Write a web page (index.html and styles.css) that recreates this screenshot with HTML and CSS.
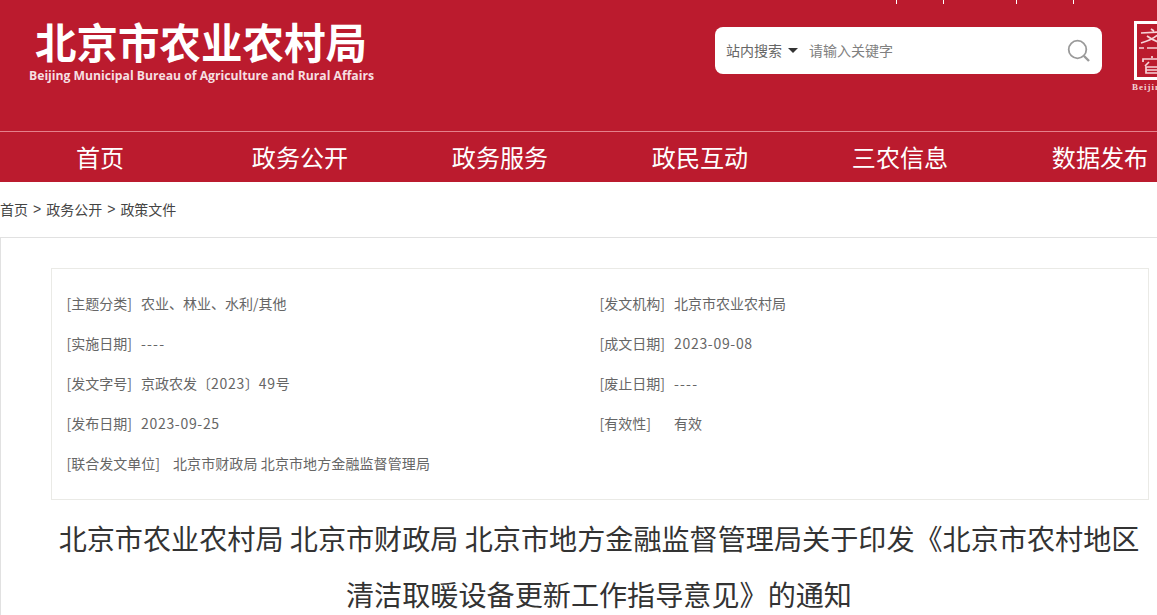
FILE: index.html
```html
<!DOCTYPE html>
<html lang="zh-CN">
<head>
<meta charset="utf-8">
<title>北京市农业农村局</title>
<link rel="stylesheet" href="styles.css">
</head>
<body>
<div class="page">
  <header class="head">
    <div class="ticks"><i></i><span class="tick-a"></span><i></i><span class="tick-b"></span><i></i><span class="tick-c"></span><i></i></div>
    <div class="brand">
      <div class="brand-cn">北京市农业农村局</div>
      <div class="brand-en">Beijing Municipal Bureau of Agriculture and Rural Affairs</div>
    </div>
    <div class="search">
      <span class="scope">站内搜索</span>
      <span class="caret"></span>
      <span class="hint">请输入关键字</span>
      <svg class="glass" width="24" height="24" viewBox="0 0 24 24" fill="none" stroke="#9a9a9a" stroke-width="1.8"><circle cx="10.5" cy="10.5" r="8.8"/><path d="M17 17l5 5" stroke-width="2.4"/></svg>
    </div>
    <div class="seal">
      <div class="seal-box">
        <svg width="34" height="53" viewBox="0 0 34 53" fill="none" stroke="#f6d5d9" stroke-width="1.7"><path d="M14 5l3 2M4 9l20-1M24 8C19 13 11 17 4 19M10 12c4 3 10 6 18 8"/><path d="M2 24h5M10 24h21" stroke-width="1.3"/><path d="M15 32v2M6 38v-3h22v3M12 38l-4 4M21 38l5 4M9 43h15v6H9zM9 46h15"/></svg>
      </div>
      <div class="seal-en">Beijing</div>
    </div>
  </header>
  <nav class="nav">
    <a>首页</a><a>政务公开</a><a>政务服务</a><a>政民互动</a><a>三农信息</a><a>数据发布</a>
  </nav>
  <div class="crumbs">
    <span>首页</span><b>&gt;</b><span>政务公开</span><b>&gt;</b><span>政策文件</span>
  </div>
  <main class="panel">
    <section class="meta">
      <div class="meta-row"><span class="key">[主题分类]</span><span>农业、林业、水利/其他</span></div>
      <div class="meta-row"><span class="key">[发文机构]</span><span>北京市农业农村局</span></div>
      <div class="meta-row"><span class="key">[实施日期]</span><span class="dash">----</span></div>
      <div class="meta-row"><span class="key">[成文日期]</span><span class="num">2023-09-08</span></div>
      <div class="meta-row"><span class="key">[发文字号]</span><span>京政农发〔<span class="num">2023</span>〕<span class="num">49</span>号</span></div>
      <div class="meta-row"><span class="key">[废止日期]</span><span class="dash">----</span></div>
      <div class="meta-row"><span class="key">[发布日期]</span><span class="num">2023-09-25</span></div>
      <div class="meta-row"><span class="key key-wide">[有效性]</span><span>有效</span></div>
      <div class="meta-row meta-full"><span class="key key-long">[联合发文单位]</span><span class="names">北京市财政局 北京市地方金融监督管理局</span></div>
    </section>
    <h1 class="title">北京市农业农村局 北京市财政局 北京市地方金融监督管理局关于印发《北京市农村地区清洁取暖设备更新工作指导意见》的通知</h1>
  </main>
</div>
</body>
</html>
```
FILE: styles.css
```css
html, body {
  margin: 0;
  padding: 0;
  height: 100%;
  overflow: hidden;
  background: #fff;
}
body {
  font-family: "Noto Sans CJK SC", "Liberation Sans", sans-serif;
}
.page {
  width: 1200px;
}
.head {
  position: relative;
  height: 131px;
  background: #bb1b2e;
  display: flex;
  align-items: flex-start;
  box-sizing: border-box;
  padding-top: 27px;
}
.ticks {
  position: absolute;
  top: 0;
  left: 896px;
  display: flex;
}
.ticks i {
  width: 1px;
  height: 4px;
  background: #fff;
}
.tick-a { width: 46px; }
.tick-b { width: 72px; }
.tick-c { width: 56px; }
.brand {
  margin-left: 28px;
  width: 687px;
  flex: none;
  color: #fff;
}
.brand-cn {
  margin-left: 7px;
  margin-top: -10px;
  font-size: 41.5px;
  font-weight: 700;
  line-height: 48px;
  white-space: nowrap;
}
.brand-en {
  margin-top: 3px;
  margin-left: 1px;
  font-family: "Open Sans", sans-serif;
  font-weight: 700;
  font-size: 12.2px;
  line-height: 16px;
  color: #f6dfe1;
  white-space: nowrap;
}
.search {
  flex: none;
  box-sizing: border-box;
  width: 387px;
  height: 47px;
  background: #fff;
  border-radius: 8px;
  display: flex;
  align-items: center;
  padding: 0 11px;
  font-size: 14px;
  line-height: 20px;
  color: #666;
}
.scope, .hint {
  margin-bottom: 2px;
}
.caret {
  margin: 0 11px 0 6px;
  border-style: solid;
  border-width: 5px 5px 0;
  border-color: #333 transparent transparent;
}
.hint {
  color: #808080;
  flex: 1;
}
.glass {
  display: block;
}
.seal {
  margin-left: 32px;
  margin-top: -6px;
  flex: none;
}
.seal-box {
  box-sizing: border-box;
  width: 40px;
  height: 59px;
  border: 3px solid #fff;
}
.seal-box svg {
  display: block;
}
.seal-en {
  margin-top: 1px;
  margin-left: -2px;
  font-family: "Liberation Serif", serif;
  font-weight: 700;
  font-size: 9px;
  line-height: 12px;
  letter-spacing: 1px;
  color: #f3d3d6;
}
.nav {
  display: flex;
  height: 50px;
  border-top: 1px solid #e5808b;
  background: #bb1b2e;
}
.nav a {
  flex: none;
  width: 200px;
  text-align: center;
  color: #fff;
  font-size: 24.1px;
  line-height: 50px;
}
.crumbs {
  height: 53px;
  padding-bottom: 2px;
  display: flex;
  align-items: center;
  gap: 5px;
  font-size: 14px;
  color: #444;
}
.crumbs b {
  font-weight: 400;
  font-family: "Liberation Sans", sans-serif;
}
.panel {
  border: 1px solid #e1e1e1;
  border-width: 1px 0 0 1px;
  box-sizing: border-box;
  padding: 30px 8px 0 50px;
}
.meta {
  box-sizing: border-box;
  width: 1098px;
  height: 232px;
  border: 1px solid #eaeae6;
  padding: 14px 15px 0;
  display: grid;
  grid-template-columns: 533px 1fr;
  grid-auto-rows: 40px;
  font-size: 14px;
  color: #666;
}
.meta-row {
  display: flex;
  align-items: center;
  white-space: nowrap;
}
.meta-full {
  grid-column: 1 / -1;
}
.key {
  margin-right: 9px;
  margin-left: -0.5px;
}
.key-wide {
  width: 65.5px;
}
.key-long {
  margin-right: 13px;
}
.names {
  letter-spacing: 0.1px;
}
.num {
  letter-spacing: 0.7px;
}
.dash {
  letter-spacing: 1.2px;
}
.title {
  margin: 10px 0 0 -1px;
  width: 1098px;
  font-size: 28.12px;
  font-weight: 400;
  line-height: 56px;
  color: #333;
  text-align: center;
}
```
